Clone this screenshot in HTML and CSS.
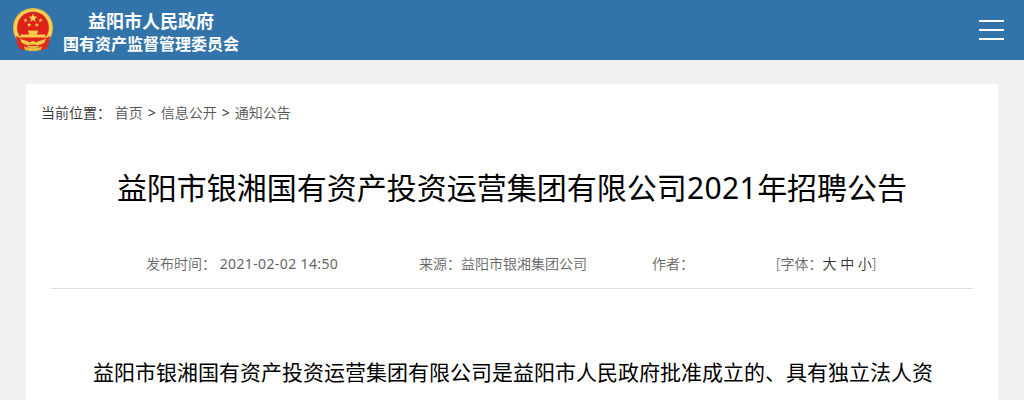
FILE: index.html
```
<!DOCTYPE html>
<html lang="zh-CN">
  <head>
    <title>益阳市银湘国有资产投资运营集团有限公司2021年招聘公告</title>
    <meta charset="UTF-8"/>
    <link rel="stylesheet" href="styles.css">
  </head>
  <body>
    <header class="header">
      <a class="logo" href="#">
        <svg class="emblem" viewBox="0 0 40 44">
          <path d="M3 28 L5 38 L7 41 L12 42 L20 43 L28 42 L33 41 L35 38 L37 28 Z" fill="#dc2a1e"/>
          <circle cx="20" cy="20" r="20" fill="#f0bb3c"/>
          <circle cx="20" cy="20" r="17.5" fill="none" stroke="#f8d45c" stroke-width="2"/>
          <circle cx="20" cy="19.5" r="15.8" fill="#dd211b"/>
          <path d="M20 5.5 L21.1 8.6 L24.4 8.7 L21.8 10.7 L22.7 13.8 L20 12 L17.3 13.8 L18.2 10.7 L15.6 8.7 L18.9 8.6 Z" fill="#fbdc55"/>
          <g fill="#f8c94a">
            <path d="M12.5 10 l.6 1.4 1.6 .1 -1.2 1 .4 1.5 -1.4-.8 -1.4 .8 .4-1.5 -1.2-1 1.6-.1z"/>
            <path d="M27.5 10 l.6 1.4 1.6 .1 -1.2 1 .4 1.5 -1.4-.8 -1.4 .8 .4-1.5 -1.2-1 1.6-.1z"/>
            <path d="M16.2 14.7 l.6 1.4 1.6 .1 -1.2 1 .4 1.5 -1.4-.8 -1.4 .8 .4-1.5 -1.2-1 1.6-.1z"/>
            <path d="M23.8 14.7 l.6 1.4 1.6 .1 -1.2 1 .4 1.5 -1.4-.8 -1.4 .8 .4-1.5 -1.2-1 1.6-.1z"/>
            <path d="M15.5 22.5 h9 l1 2 h-1.5 v2 h8.5 v3 H7.5 v-3 H16 v-2 h-1.5 z"/>
          </g>
          <path d="M3 28 L7 30 L16 32 H24 L33 30 L37 28 L36 35 L33 41 L28 42 L25 38 H15 L12 42 L7 41 L4 35 Z" fill="#dc2a1e"/>
          <path d="M7 31 L14 33 L17 34.5 Q20 31.5 23 34.5 L26 33 L33 31 L31 35 L25 37.5 Q20 35.5 15 37.5 L9 35 Z" fill="#f6cb48"/>
          <path d="M11 38.5 L16 40 H24 L29 38.5 L28 42 L23 43 H17 L12 42 Z" fill="#f0b93f"/>
        </svg>
        <div class="logo-text">
          <div class="logo-gov">益阳市人民政府</div>
          <div class="logo-dept">国有资产监督管理委员会</div>
        </div>
      </a>
      <div class="menu-btn">
        <span></span>
        <span></span>
        <span></span>
      </div>
    </header>
    <div class="main">
      <div class="position">当前位置： <a href="#">首页</a><span class="sep">&gt;</span><a href="#">信息公开</a><span class="sep">&gt;</span><a href="#">通知公告</a></div>
      <h1 class="title">益阳市银湘国有资产投资运营集团有限公司<span class="year">2021</span>年招聘公告</h1>
      <div class="info">
        <span>发布时间： <span class="date">2021-02-02 14:50</span></span>
        <span>来源：益阳市银湘集团公司</span>
        <span>作者：</span>
        <span>[字体：<a href="#">大</a> <a href="#">中</a> <a href="#">小</a>]</span>
      </div>
      <div class="content">
        <p>益阳市银湘国有资产投资运营集团有限公司是益阳市人民政府批准成立的、具有独立法人资</p>
      </div>
    </div>
  </body>
</html>
```

FILE: styles.css
```
* {
  margin: 0;
  padding: 0;
  box-sizing: border-box;
}
body {
  font-family: "Noto Sans", "Noto Sans CJK SC", sans-serif;
  font-size: 14px;
  font-weight: 350;
  color: #333;
  background-color: #f1f1f1;
}
a {
  text-decoration: none;
  color: #333;
}
.header {
  display: flex;
  align-items: flex-start;
  justify-content: space-between;
  height: 60px;
  padding: 0 20px 0 13px;
  background-color: #3274aa;
}
.logo {
  display: flex;
  color: white;
}
.emblem {
  width: 40px;
  height: 44px;
  margin-top: 8px;
}
.logo-text {
  margin: 9px 0 0 10px;
  font-weight: bold;
  text-align: center;
}
.logo-gov {
  font-size: 18px;
  line-height: 24px;
}
.logo-dept {
  font-size: 16px;
  line-height: 23px;
}
.menu-btn {
  display: flex;
  flex-direction: column;
  gap: 7px;
  width: 25px;
  margin-top: 20px;
}
.menu-btn span {
  height: 2px;
  background-color: white;
}
.main {
  height: 316px;
  margin: 24px 26px 0 26px;
  padding: 0 25px;
  background-color: white;
  overflow: hidden;
}
.position {
  margin-left: -10px;
  padding-top: 14px;
  line-height: 30px;
}
.position a {
  color: #555;
}
.sep {
  display: inline-block;
  width: 18px;
  font-weight: normal;
  text-align: center;
}
.title {
  margin-top: 35px;
  font-size: 30px;
  font-weight: normal;
  line-height: 50px;
  text-align: center;
  color: black;
}
.year {
  letter-spacing: 0.4px;
}
.info {
  display: grid;
  grid-template-columns: 273px 233px 124px auto;
  height: 76px;
  padding: 36px 0 0 95px;
  border-bottom: 1px solid #ddd;
  line-height: 30px;
  color: #666;
}
.date {
  font-weight: normal;
  letter-spacing: 0.38px;
}
.content {
  padding: 62px 0 0 42px;
  font-size: 21px;
  font-weight: normal;
  line-height: 42px;
  white-space: nowrap;
  color: black;
}
```
